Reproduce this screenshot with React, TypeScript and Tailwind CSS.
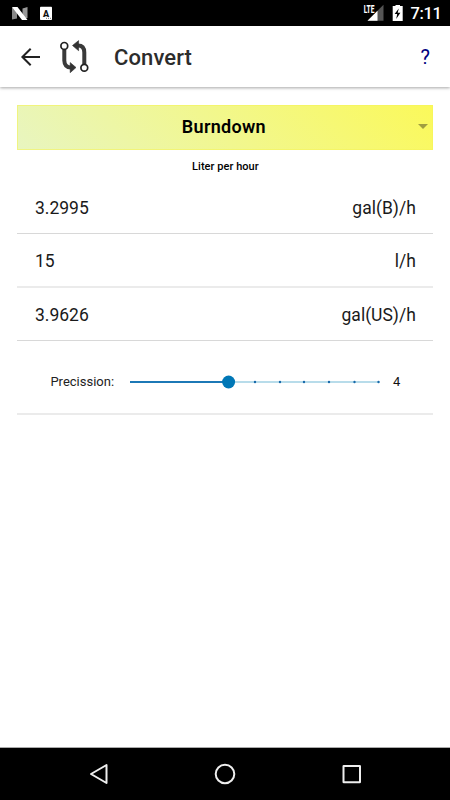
import React from 'react';

interface Conversion {
  value: string;
  unit: string;
  border: string;
}

const conversions: Conversion[] = [
  { value: '3.2995', unit: 'gal(B)/h', border: 'h-[54px] border-b border-[#d8d8d8] pt-[3px]' },
  { value: '15', unit: 'l/h', border: 'h-[54px] border-b-2 border-[#ebebeb] pt-[3px]' },
  { value: '3.9626', unit: 'gal(US)/h', border: 'h-[53px] border-b border-[#d8d8d8] pt-[2px]' },
];

const ticks = [125, 150, 174, 199, 224.5, 248.5];

const StatusBar: React.FC = () => (
  <div className="flex h-[26px] shrink-0 items-center justify-between bg-black">
    <svg width="60" height="26" viewBox="0 0 60 26">
      <path d="M12 7.5L17 9V18.5L12 19.5Z" fill="#888" />
      <path d="M22.5 8.5L27.5 7V18L22.5 19Z" fill="#999" />
      <path d="M12 7H17.5L27.5 20H22Z" fill="#fff" />
      <rect x="40" y="6.7" width="12" height="13.3" rx="0.8" fill="#fff" />
      <text x="46" y="16.6" textAnchor="middle" fontFamily="Roboto, sans-serif" fontSize="9" fontWeight="900" fill="#111">A</text>
      <path d="M46 18.3H51" stroke="#777" strokeDasharray="1 1" />
    </svg>
    <div className="flex items-center">
      <svg width="50" height="26" viewBox="0 0 50 26">
        <path d="M29.5 4.7V20.7H13.5Z" fill="#555" />
        <path d="M23.5 10.7V20.7H13.5Z" fill="#fff" />
        <path d="M8 3H20.5V13.5H8Z" fill="#000" />
        <text x="9.7" y="12.7" textLength="10.7" lengthAdjust="spacingAndGlyphs" fontFamily="Roboto, sans-serif" fontSize="10" fontWeight="800" fill="#fff">LTE</text>
        <path d="M41.5 6V5H46V6H48.7V21H38.7V6Z" fill="#fff" />
        <path d="M44.8 8.5L40.6 14H43.2L42.2 19L46.4 12.8H43.7Z" fill="#000" />
      </svg>
      <span className="mt-[2px] w-[46px] pl-[6.5px] text-[16.5px] leading-[26px] font-medium tracking-[-0.4px] text-white">7:11</span>
    </div>
  </div>
);

const Header: React.FC = () => (
  <header className="relative flex h-[61px] shrink-0 items-center bg-white shadow-[0_1px_3px_rgba(0,0,0,0.35)]">
    <svg className="ml-5" width="21" height="20" viewBox="0 0 21 20" fill="none" stroke="#222" strokeWidth="2">
      <path d="M20 10H2.5M10.7 1.7L2.4 10L10.7 18.3" />
    </svg>
    <svg className="ml-[17px]" width="34" height="38" viewBox="58 38 34 38">
      <path d="M64.3 50V60.5Q64.5 67.5 71 67.5M84.3 64V52.5Q84.3 45.5 78 45.5" fill="none" stroke="#3a3a3a" strokeWidth="4" />
      <path d="M70.2 62.6L76 67.5L70.2 72.7Z" fill="#333" stroke="#333" strokeWidth="0.6" />
      <path d="M78.6 40.6L72.5 45.5L78.6 50.7Z" fill="#333" stroke="#333" strokeWidth="0.6" />
      <circle cx="64.3" cy="45.9" r="3.4" fill="#fff" stroke="#222" strokeWidth="1.7" />
      <circle cx="84.3" cy="67.8" r="3.4" fill="#fff" stroke="#222" strokeWidth="1.7" />
    </svg>
    <h1 className="mt-[2px] ml-[22px] text-[22px] leading-7 font-medium tracking-[0.1px] text-[#2c2c2c]">Convert</h1>
    <span className="mr-5 ml-auto text-[20px] leading-6 text-[#000080]">?</span>
  </header>
);

const PrecisionSlider: React.FC = () => (
  <div className="flex h-[74px] items-center border-b-2 border-[#ebebeb] pt-[10px] pl-[33px]">
    <span className="w-[79.5px] text-[13px] text-[#222]">Precission:</span>
    <svg width="250" height="14" viewBox="0 0 250 14" className="shrink-0">
      <path d="M98 7H249.5" stroke="#b8dcea" strokeWidth="2" />
      <path d="M0 7H98" stroke="#1c78b6" strokeWidth="2" />
      {ticks.map((tick) => (
        <circle key={tick} cx={tick} cy="7" r="1.2" fill="#1769aa" />
      ))}
      <circle cx="98.6" cy="7" r="6.5" fill="#0077b6" />
    </svg>
    <span className="ml-[13px] text-[13px] text-[#111]">4</span>
  </div>
);

const NavigationBar: React.FC = () => (
  <nav className="h-[53px] shrink-0 border-t border-[#aaa] bg-black">
    <svg width="450" height="52" viewBox="0 748 450 52" fill="none" stroke="#eee" strokeWidth="2">
      <path d="M91 774L106.5 765V783Z" strokeLinejoin="round" />
      <circle cx="225" cy="774" r="9.3" />
      <rect x="343.5" y="766" width="16.5" height="16.2" rx="0.3" />
    </svg>
  </nav>
);

const App: React.FC = () => {
  return (
    <div className="flex h-[800px] w-[450px] flex-col overflow-hidden bg-white font-['Roboto',sans-serif]">
      <StatusBar />
      <Header />
      <main className="flex-1 pt-[18px] pr-[16.6px] pl-[17.4px]">
        <div className="relative flex h-[45px] items-center justify-center border border-[#f5f35a]/60 bg-linear-[45deg,#e8f5c0,#fbf95a] bg-origin-border pb-[3px]">
          <span className="pr-[3px] text-[18px] font-semibold tracking-[0.3px] text-black">Burndown</span>
          <svg className="absolute top-[18px] right-1" width="10" height="5" viewBox="0 0 10 5">
            <path d="M0 0H10L5 5Z" fill="#a09e40" />
          </svg>
        </div>
        <p className="h-[25px] pt-[8px] text-center text-[11px] leading-[17px] font-medium tracking-[0.05px] text-black">Liter per hour</p>
        <div className="pt-[5px]">
          {conversions.map((item) => (
            <div key={item.unit} className={`flex items-center justify-between px-[17.6px] text-[17.5px] text-[#1a1a1a] ${item.border}`}>
              <span>{item.value}</span>
              <span>{item.unit}</span>
            </div>
          ))}
        </div>
        <PrecisionSlider />
      </main>
      <NavigationBar />
    </div>
  );
};

export default App;
